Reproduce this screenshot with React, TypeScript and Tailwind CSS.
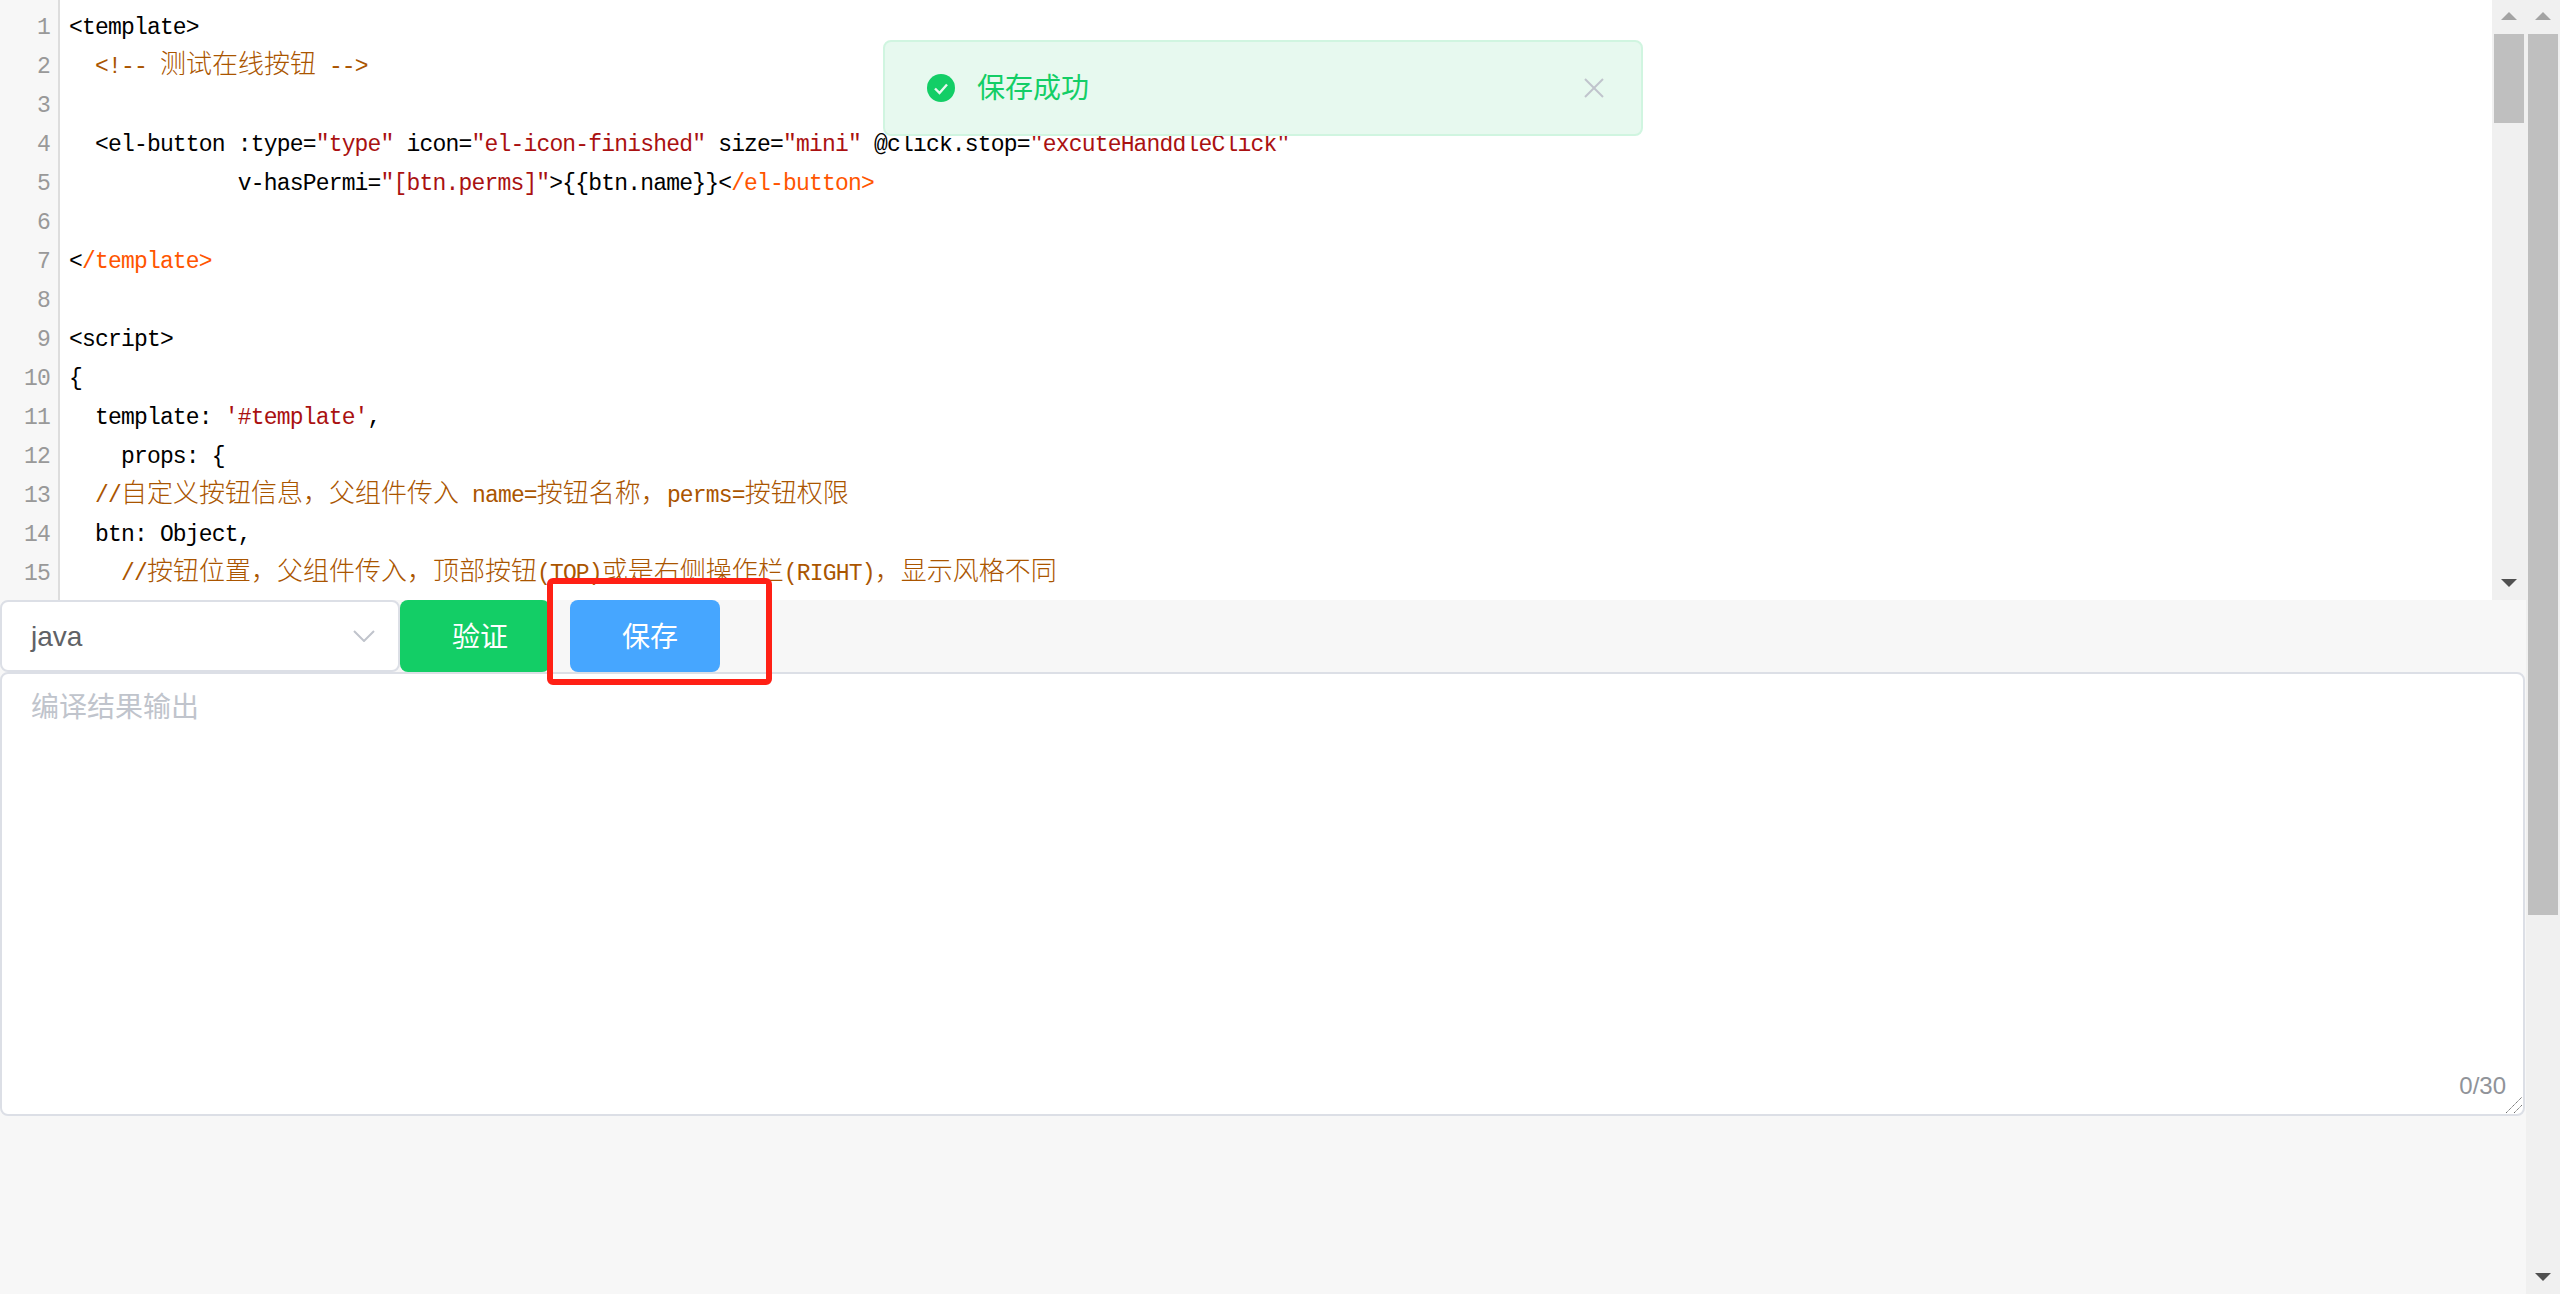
import React from "react";

const K = "#000000";
const S = "#aa1111";
const C = "#aa5500";
const T = "#ff5500";

type Seg = [string, string];

const lines: Seg[][] = [
  [["<template>", K]],
  [["  ", K], ["<!-- 测试在线按钮 -->", C]],
  [],
  [
    ["  <el-button :type=", K],
    ['"type"', S],
    [" icon=", K],
    ['"el-icon-finished"', S],
    [" size=", K],
    ['"mini"', S],
    [" @click.stop=", K],
    ['"excuteHanddleClick"', S],
  ],
  [
    ["             v-hasPermi=", K],
    ['"[btn.perms]"', S],
    [">{{btn.name}}<", K],
    ["/el-button>", T],
  ],
  [],
  [["<", K], ["/template>", T]],
  [],
  [["<script>", K]],
  [["{", K]],
  [["  template: ", K], ["'#template'", S], [",", K]],
  [["    props: {", K]],
  [["  ", K], ["//自定义按钮信息，父组件传入 name=按钮名称，perms=按钮权限", C]],
  [["  btn: Object,", K]],
  [["    ", K], ["//按钮位置，父组件传入，顶部按钮(TOP)或是右侧操作栏(RIGHT)，显示风格不同", C]],
];

function Mixed({ text, color }: { text: string; color: string }) {
  const parts = text.split(/([\u3000-\u9fff\uff00-\uffef]+)/);
  return (
    <span style={{ color }}>
      {parts.map((p, i) =>
        i % 2 === 1 ? (
          <span key={i} className="text-[26px] leading-[0] tracking-normal font-['Noto_Sans_CJK_SC',sans-serif] font-light">
            {p}
          </span>
        ) : (
          <span key={i}>{p}</span>
        )
      )}
    </span>
  );
}

function Arrow({ dir, color }: { dir: "up" | "down"; color: string }) {
  return (
    <svg width="16" height="8" viewBox="0 0 16 8" className="block">
      <polygon points={dir === "up" ? "8,0 16,8 0,8" : "0,0 16,0 8,8"} fill={color} />
    </svg>
  );
}

function EditorScrollbar() {
  return (
    <div className="w-[34px] h-full shrink-0 bg-[#f0f0f0] flex flex-col items-center">
      <div className="h-[34px] shrink-0 flex items-center justify-center pb-[2px]">
        <Arrow dir="up" color="#a3a3a3" />
      </div>
      <div className="w-[30px] h-[89px] bg-[#bfbfbf]" />
      <div className="flex-1" />
      <div className="h-[34px] shrink-0 flex items-center justify-center">
        <Arrow dir="down" color="#505050" />
      </div>
    </div>
  );
}

function PageScrollbar() {
  return (
    <div className="w-[34px] h-full shrink-0 bg-[#f0f0f0] flex flex-col items-center">
      <div className="h-[34px] shrink-0 flex items-center justify-center pb-[2px]">
        <Arrow dir="up" color="#a3a3a3" />
      </div>
      <div className="w-[30px] h-[881px] bg-[#bfbfbf]" />
      <div className="flex-1" />
      <div className="h-[34px] shrink-0 flex items-center justify-center">
        <Arrow dir="down" color="#505050" />
      </div>
    </div>
  );
}

export default function App() {
  return (
    <div className="relative flex w-[2560px] h-[1294px] overflow-hidden bg-[#f7f7f7] font-['Liberation_Sans','Noto_Sans_CJK_SC',sans-serif]">
      <div className="flex-1 min-w-0 flex flex-col">
        {/* editor */}
        <div className="h-[600px] shrink-0 flex bg-white overflow-hidden">
          <div className="w-[60px] shrink-0 bg-[#f7f7f7] border-r-2 border-[#dddddd] pt-[9px] pr-[8px] text-right text-[23px] tracking-[-0.8px] leading-[39px] text-[#999999] font-['Liberation_Mono',monospace]">
            {lines.map((_, i) => (
              <div key={i} className="h-[39px]">
                {i + 1}
              </div>
            ))}
          </div>
          <div className="flex-1 min-w-0 pt-[9px] pl-[9px] text-[23px] tracking-[-0.82px] leading-[39px] font-['Liberation_Mono',monospace] whitespace-pre overflow-hidden">
            {lines.map((segs, i) => (
              <div key={i} className="h-[39px]">
                {segs.map((s, j) => (
                  <Mixed key={j} text={s[0]} color={s[1]} />
                ))}
              </div>
            ))}
          </div>
          <EditorScrollbar />
        </div>

        {/* toolbar */}
        <div className="h-[72px] shrink-0 flex">
          <div className="w-[400px] h-full shrink-0 bg-white border-2 border-[#dcdfe6] rounded-[8px] flex items-center justify-between pl-[29px] pr-[23px] text-[28px] text-[#606266]">
            <span className="pt-[2px]">java</span>
            <svg width="22" height="12" viewBox="0 0 22 12" fill="none" stroke="#c0c4cc" strokeWidth="2">
              <polyline points="1,1 11,11 21,1" />
            </svg>
          </div>
          <button className="w-[150px] h-full shrink-0 rounded-[8px] bg-[#13ce66] text-white text-[28px] pt-[3px] pl-[52px] text-left">
            验证
          </button>
          <button className="w-[150px] h-full shrink-0 ml-[20px] rounded-[8px] bg-[#46a6ff] text-white text-[28px] pt-[3px] pl-[52px] text-left">
            保存
          </button>
        </div>

        {/* textarea */}
        <div className="relative h-[444px] shrink-0 mr-px bg-white border-2 border-[#dcdfe6] rounded-[8px] pl-[29px] pt-[13px]">
          <div className="text-[28px] leading-[42px] text-[#c0c4cc]">编译结果输出</div>
          <span className="absolute right-[17px] bottom-[12px] text-[24px] leading-[32px] text-[#909399]">0/30</span>
          <svg width="18" height="18" viewBox="0 0 18 18" className="absolute right-0 bottom-0" fill="none" stroke="#6b6b6b" strokeWidth="1" strokeDasharray="1.4 0.6">
            <line x1="1" y1="17" x2="17" y2="1" />
            <line x1="9" y1="17" x2="17" y2="9" />
          </svg>
        </div>
      </div>

      <PageScrollbar />

      {/* message toast */}
      <div className="absolute left-[883px] top-[40px] w-[760px] h-[96px] bg-[#e7f9ef] border-2 border-[#d0f5e0] rounded-[8px] flex items-center pl-[42px] pr-[37px]">
        <svg width="28" height="28" viewBox="0 0 28 28" className="shrink-0">
          <circle cx="14" cy="14" r="14" fill="#13ce66" />
          <polyline points="8,14.5 12.5,19 20,10.5" fill="none" stroke="#e7f9ef" strokeWidth="2.4" />
        </svg>
        <span className="ml-[22px] pt-[2px] text-[28px] text-[#13ce66] flex-1">保存成功</span>
        <svg width="20" height="20" viewBox="0 0 20 20" className="shrink-0" stroke="#c0c4cc" strokeWidth="2">
          <line x1="1" y1="1" x2="19" y2="19" />
          <line x1="19" y1="1" x2="1" y2="19" />
        </svg>
      </div>

      {/* red annotation */}
      <div className="absolute left-[547px] top-[578px] w-[225px] h-[107px] border-[6px] border-[#ff2015] rounded-[6px]" />
    </div>
  );
}
